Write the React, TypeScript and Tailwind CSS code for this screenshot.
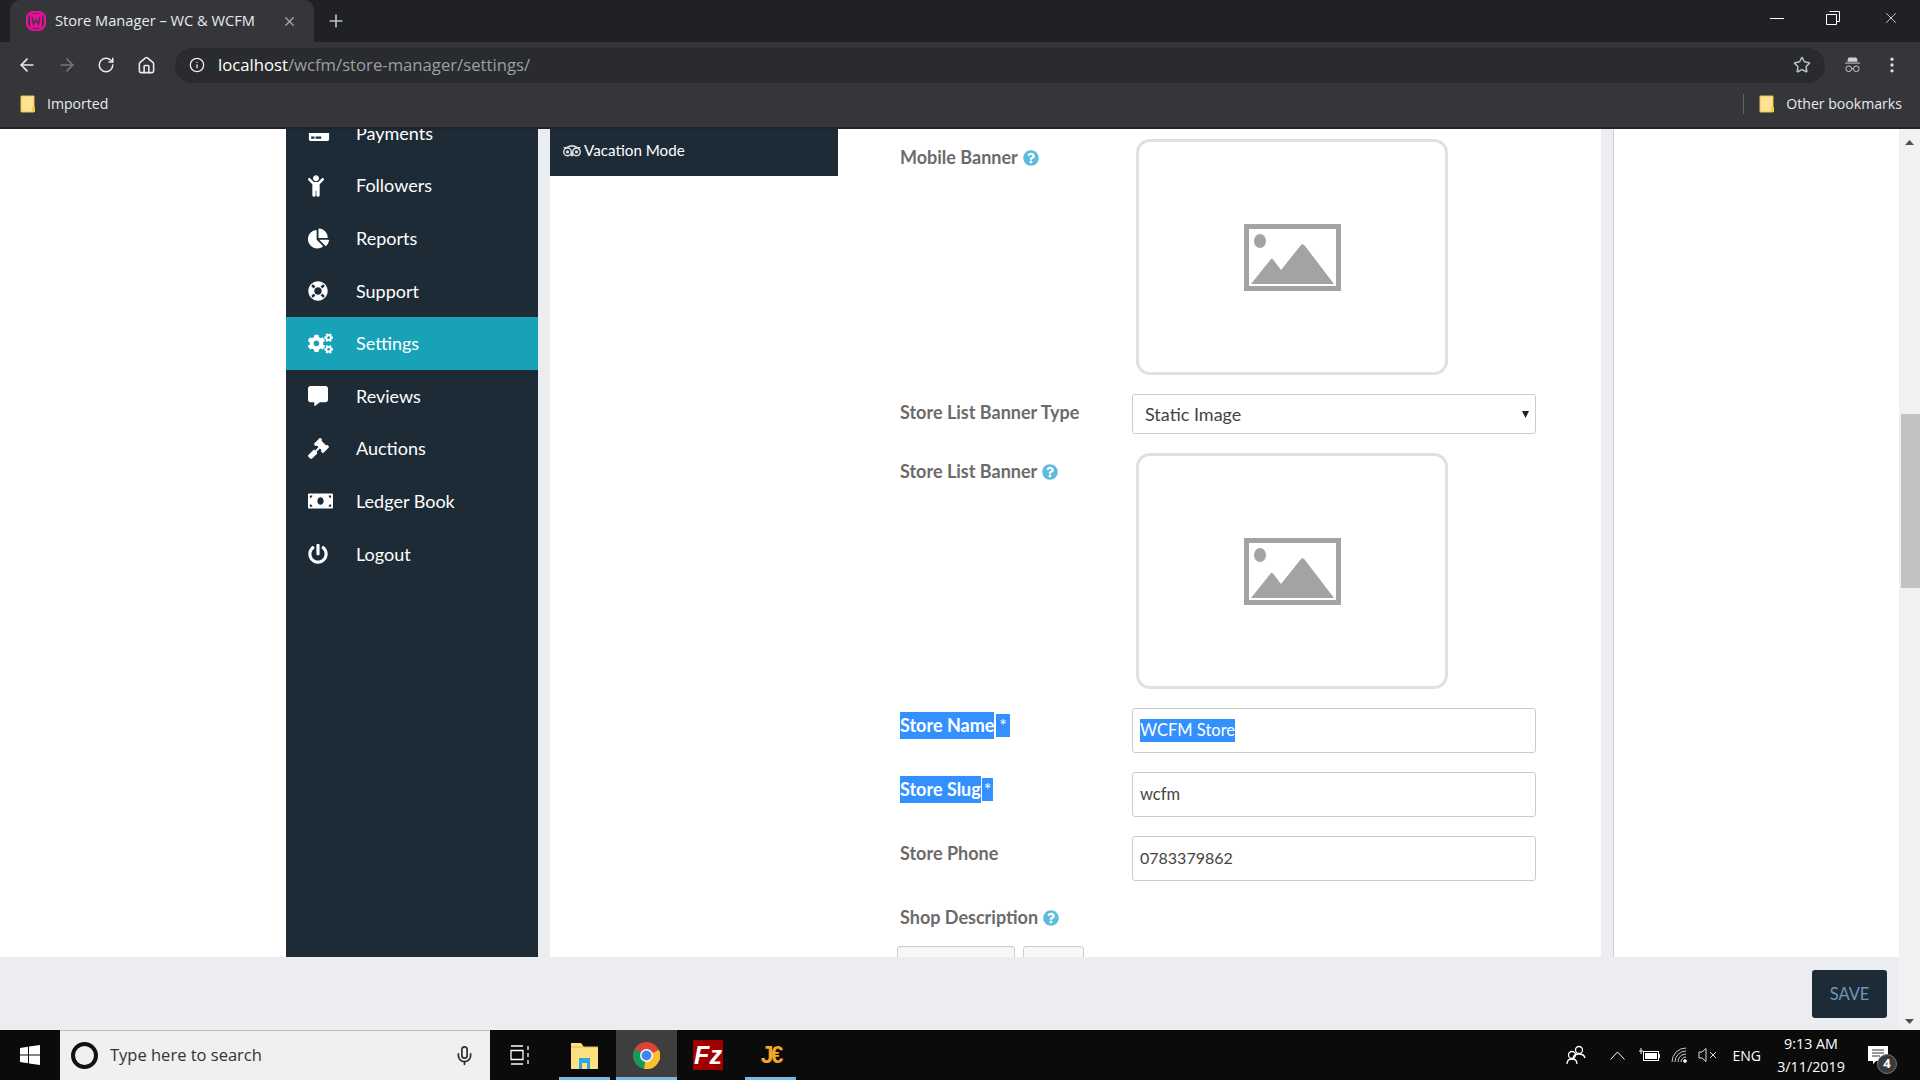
import React from "react";
import { ArrowLeft, ArrowRight, RotateCw, Home, Info, Star, MoreVertical, X, Plus, Mic } from "lucide-react";
import { FaCreditCard, FaChild, FaChartPie, FaLifeRing, FaCogs, FaCommentAlt, FaGavel, FaMoneyBill, FaPowerOff, FaTripadvisor, FaQuestionCircle } from "react-icons/fa";

const Folder = ({ className = "" }: { className?: string }) => (
  <svg width="16" height="18" viewBox="0 0 16 18" className={className}>
    <path d="M1 1h13v16H1z" fill="#fde293" stroke="#e8c34e" strokeWidth="1" />
    <rect x="12" y="12" width="3" height="5" fill="#f5c842" />
  </svg>
);

const Help = () => <FaQuestionCircle className="text-[#5bbcdd] w-[16px] h-[18px] ml-[5px] mt-[4px] shrink-0" />;

const Mountain = () => (
  <svg width="97" height="67" viewBox="0 0 97 67" className="block">
    <rect x="2.500" y="2.500" width="92" height="62" fill="#fff" stroke="#a3a3a3" strokeWidth="5" />
    <ellipse cx="16" cy="17" rx="6" ry="7" fill="#a3a3a3" />
    <path d="M7 60 L27 35 Q28 34 29.500 36 L37 46 L57 21 Q59 19 61 22 L90 60 Z" fill="#a3a3a3" />
  </svg>
);

const ImageBox = () => (
  <div className="w-[312px] h-[236px] ml-[4px] border-[3px] border-[#e0e0e0] rounded-[14px] flex items-center justify-center bg-white">
    <Mountain />
  </div>
);

const Label = ({ children }: { children: React.ReactNode }) => (
  <div className="w-[232px] shrink-0 flex items-start text-[18px] font-bold text-[#6b6b6b] leading-[24px]">{children}</div>
);

const Field = ({ children }: { children: React.ReactNode }) => (
  <div className="w-[404px] h-[45px] border border-[#ccc] rounded-[3px] bg-white flex items-center px-[7px] text-[16.500px] text-[#444] pb-[1px]">{children}</div>
);

const nav = [
  { t: "Payments", I: FaCreditCard, w: 22, h: 18 },
  { t: "Followers", I: FaChild, w: 16, h: 22 },
  { t: "Reports", I: FaChartPie, w: 21, h: 21 },
  { t: "Support", I: FaLifeRing, w: 20, h: 20 },
  { t: "Settings", I: FaCogs, w: 25, h: 21 },
  { t: "Reviews", I: FaCommentAlt, w: 20, h: 20 },
  { t: "Auctions", I: FaGavel, w: 21, h: 21 },
  { t: "Ledger Book", I: FaMoneyBill, w: 25, h: 20 },
  { t: "Logout", I: FaPowerOff, w: 20, h: 20 },
];

const Sidebar = () => (
  <div className="w-[252px] shrink-0 bg-[#1d2b37] overflow-hidden">
    <div className="-mt-[22px]">
      {nav.map(({ t, I, w, h }) => (
        <div key={t} className={`h-[52.6px] flex items-center text-white text-[18px] ${t === "Settings" ? "bg-[#17a2b8]" : ""}`}>
          <div className="w-[70px] pl-[22px] shrink-0 flex items-center">
            <I style={{ width: w, height: h }} />
          </div>
          <span>{t}</span>
        </div>
      ))}
    </div>
  </div>
);

const Form = () => (
  <div className="pl-[62px] pt-[10px]">
    <div className="flex">
      <Label><span className="mt-[6px] flex">Mobile Banner<Help /></span></Label>
      <ImageBox />
    </div>
    <div className="flex mt-[19px]">
      <Label><span className="mt-[6px]">Store List Banner Type</span></Label>
      <div className="w-[404px] h-[40px] border border-[#ccc] rounded-[3px] flex items-center justify-between pl-[12px] pr-[6px] text-[18px] text-[#444]">
        <span>Static Image</span>
        <svg width="7" height="8" viewBox="0 0 7 8"><path d="M0 1h7L3.500 8z" fill="#222" /></svg>
      </div>
    </div>
    <div className="flex mt-[19px]">
      <Label><span className="mt-[6px] flex">Store List Banner<Help /></span></Label>
      <ImageBox />
    </div>
    <div className="flex mt-[19px]">
      <Label>
        <span className="mt-[4px] flex items-start">
          <span className="bg-[#3390ff] text-white leading-[27px]">Store Name</span>
          <span className="bg-[#3390ff] text-white font-normal leading-[23px] ml-[2px] mt-[2px] px-[3px]">*</span>
        </span>
      </Label>
      <Field><span className="bg-[#3390ff] text-white leading-[23px] mt-[1px]">WCFM Store</span></Field>
    </div>
    <div className="flex mt-[19px]">
      <Label>
        <span className="mt-[4px] flex items-start">
          <span className="bg-[#3390ff] text-white leading-[27px]">Store Slug</span>
          <span className="bg-[#3390ff] text-white font-normal leading-[23px] ml-[1px] mt-[2px] px-[2px]">*</span>
        </span>
      </Label>
      <Field>wcfm</Field>
    </div>
    <div className="flex mt-[19px]">
      <Label><span className="mt-[5px]">Store Phone</span></Label>
      <Field><span className="text-[16px]">0783379862</span></Field>
    </div>
    <div className="flex mt-[24px]">
      <Label><span className="flex">Shop Description<Help /></span></Label>
    </div>
    <div className="flex gap-[8px] mt-[17px] -ml-[3px]">
      <div className="w-[118px] h-[30px] border border-[#ccc] rounded-[3px] bg-[#f7f7f7]" />
      <div className="w-[61px] h-[30px] border border-[#ccc] rounded-[3px] bg-[#f7f7f7]" />
    </div>
  </div>
);

const ChromeBars = () => (
  <div className="h-[129px] shrink-0 bg-[#35363a] text-white font-['Open_Sans'] border-b-2 border-[#222326]">
    <div className="h-[42px] bg-[#202124] flex items-end">
      <div className="ml-[10px] w-[304px] h-[42px] bg-[#35363a] rounded-t-[10px] flex items-center pl-[16px]">
        <svg width="20" height="20" viewBox="0 0 20 20" className="shrink-0">
          <rect x="1" y="1" width="18" height="18" rx="7" fill="none" stroke="#e5109a" strokeWidth="2.500" />
          <rect x="4" y="3" width="12" height="14" rx="2" fill="#e5109a" />
          <path d="M6 6l1.500 7 2.500-4 2.500 4L14 6" fill="none" stroke="#35363a" strokeWidth="1.300" />
        </svg>
        <span className="ml-[9px] w-[222px] text-[14.650px] whitespace-nowrap text-[#e8eaed]">Store Manager – WC &amp; WCFM</span>
        <X size={15} className="text-[#aaa] ml-[5px]" />
      </div>
      <Plus size={20} className="text-[#bdc1c6] ml-[12px] mb-[11px]" />
      <div className="flex-1" />
      <div className="flex items-center h-[42px] pb-[6px] pr-[20px]">
        <div className="w-[14px] h-px bg-white" />
        <svg width="14" height="14" viewBox="0 0 14 14" fill="none" stroke="#fff" className="ml-[42px]"><path d="M3.500.5h10v10h-3M.5 3.500h10v10H.5z" /></svg>
        <X size={18} strokeWidth={1} className="text-white ml-[42px]" />
      </div>
    </div>
    <div className="h-[45px] flex items-center relative pt-[1px]">
      <div className="flex items-center pl-[17px] w-[175px]">
        <ArrowLeft size={20} className="text-[#e8eaed]" />
        <ArrowRight size={20} className="text-[#777] ml-[20px]" />
        <RotateCw size={18} className="text-[#e8eaed] ml-[20px]" />
        <Home size={19} className="text-[#e8eaed] ml-[22px]" />
      </div>
      <div className="w-[1650px] h-[35px] bg-[#292b2e] rounded-full flex items-center pl-[14px] pr-[14px]">
        <Info size={16} className="text-[#e8eaed]" />
        <span className="ml-[13px] text-[16.700px]"><span className="text-white">localhost</span><span className="text-[#9aa0a6]">/wcfm/store-manager/settings/</span></span>
        <Star size={18} className="ml-auto text-[#bdc1c6]" />
      </div>
      <svg width="17" height="16" viewBox="0 0 18 17" className="ml-[19px] shrink-0" fill="none" stroke="#d0d0d0" strokeWidth="1">
        <path d="M5 1h8l1 3.500H4z" fill="#d0d0d0" /><path d="M1 6.500h16" /><circle cx="5" cy="12.500" r="3" /><circle cx="13" cy="12.500" r="3" /><path d="M8 12.500h2" />
      </svg>
      <MoreVertical size={20} className="ml-[21px] text-[#e0e0e0]" />
    </div>
    <div className="h-[40px] flex items-center text-[14.100px] text-[#e8eaed] pb-[6px]">
      <Folder className="ml-[20px]" />
      <span className="ml-[11px]">Imported</span>
      <div className="ml-auto w-px h-[20px] bg-[#5f6368]" />
      <Folder className="ml-[15px]" />
      <span className="ml-[11px] mr-[18px]">Other bookmarks</span>
    </div>
  </div>
);

const WinLogo = () => (
  <svg width="20" height="20" viewBox="0 0 20 20" fill="#fff"><path d="M0 3l8-1.200V9.500H0zM9 1.600L20 0v9.500H9zM0 10.500h8v7.700L0 17zM9 10.500h11V20L9 18.400z" /></svg>
);

const ChromeLogo = () => (
  <svg width="27" height="27" viewBox="0 0 27 27">
    <circle cx="13.500" cy="13.500" r="13.500" fill="#db4437" />
    <path d="M13.500 13.500L2 7A13.500 13.500 0 0 0 11 26.800z" fill="#0f9d58" />
    <path d="M13.500 13.500L26 8A13.500 13.500 0 0 1 11 26.800z" fill="#fbc02d" />
    <circle cx="13.500" cy="13.500" r="6.500" fill="#fff" />
    <circle cx="13.500" cy="13.500" r="5" fill="#4285f4" />
  </svg>
);

const TaskItem = ({ w, active, hover, children }: { w: number; active?: boolean; hover?: boolean; children: React.ReactNode }) => (
  <div style={{ width: w }} className={`h-[50px] flex items-center justify-center relative ${hover ? "bg-[#3e3e3e]" : ""}`}>
    {children}
    {active && <div className="absolute bottom-0 left-0 right-0 h-[3px] bg-[#76b9ed]" />}
  </div>
);

const Taskbar = () => (
  <div className="h-[50px] shrink-0 bg-[#0b0b0b] flex items-center text-white font-['Open_Sans']">
    <div className="w-[60px] flex justify-center"><WinLogo /></div>
    <div className="w-[430px] h-[50px] bg-[#f0f0f0] border-t border-[#bbb] flex items-center pl-[11px] text-[#333]">
      <div className="w-[27px] h-[27px] rounded-full border-[4px] border-[#111]" />
      <span className="ml-[12px] text-[16.500px]">Type here to search</span>
      <Mic size={21} className="ml-auto mr-[15px] text-[#333]" />
    </div>
    <div className="w-[69px] flex justify-center pr-[10px]">
      <svg width="20" height="20" viewBox="0 0 20 20" fill="none" stroke="#fff" strokeWidth="1.300">
        <path d="M1 1h12M1 19h12M1 5.500h12v9H1zM18 1v4M18 8v4M18 15v4" />
      </svg>
    </div>
    <TaskItem w={51} active>
      <svg width="27" height="27" viewBox="0 0 27 27">
        <path d="M0 1h10l3 4h14v22H0z" fill="#fde07f" />
        <path d="M0 5h27" stroke="#e2b93f" />
        <path d="M8 16h11v11h-3v-6h-5v6H8z" fill="#2fa8e0" />
      </svg>
    </TaskItem>
    <div className="w-[6px]" />
    <TaskItem w={61} active hover><ChromeLogo /></TaskItem>
    <div className="w-[4px]" />
    <TaskItem w={54}>
      <div className="w-[30px] h-[30px] bg-[#a00000] flex items-center justify-center text-white text-[25px] font-bold italic leading-none font-['Liberation_Sans']">Fz</div>
    </TaskItem>
    <div className="w-[10px]" />
    <TaskItem w={51} active>
      <span className="text-[#f5a623] text-[23px] font-bold font-['Liberation_Sans'] leading-none tracking-[-3px]">J€</span>
    </TaskItem>
    <div className="flex-1" />
    <svg width="20" height="20" viewBox="0 0 20 20" fill="none" stroke="#fff" strokeWidth="1.300" className="mr-[24px]">
      <circle cx="13" cy="5" r="3.500" /><path d="M7 13q1-4 6-4 5 0 6 4" /><circle cx="6" cy="10" r="3.500" /><path d="M1 19q0-5 5-5t5 5" />
    </svg>
    <svg width="15" height="9" viewBox="0 0 15 9" fill="none" stroke="#fff" className="mr-[14px]"><path d="M.5 8.500L7.500 1l7 7.500" /></svg>
    <svg width="21" height="14" viewBox="0 0 21 14" className="mr-[11px]"><rect x="4.500" y="3.500" width="15" height="9" fill="#000" stroke="#fff" /><rect x="6" y="5" width="12" height="6" fill="#fff" /><rect x="20" y="6" width="1" height="4" fill="#fff" /><path d="M0 3h4M2 0v6" stroke="#fff" /></svg>
    <svg width="16" height="16" viewBox="0 0 16 16" fill="none" stroke="#ccc" className="mr-[11px]"><path d="M1 15A14 14 0 0 1 15 1M4 15A11 11 0 0 1 15 4M7 15a8 8 0 0 1 8-8M10 15a5 5 0 0 1 5-5" /><circle cx="14" cy="14" r="1.500" fill="#fff" /></svg>
    <svg width="20" height="14" viewBox="0 0 20 14" fill="none" stroke="#ddd" className="mr-[15px]"><path d="M1 4h3l4-3.500v13L4 10H1zM12 4l6 6M18 4l-6 6" /></svg>
    <span className="text-[14px] mr-[14px]">ENG</span>
    <div className="w-[72px] text-center text-[14.300px] leading-[23px] whitespace-nowrap flex flex-col items-center"><span>9:13 AM</span><span>3/11/2019</span></div>
    <div className="w-[73px] pl-[21px] relative h-[50px] flex items-center">
      <svg width="20" height="18" viewBox="0 0 20 18"><path d="M0 0h20v15H8l-3 3v-3H0z" fill="#fff" /><path d="M4 4h12M4 7h12M4 10h8" stroke="#333" /></svg>
      <div className="absolute left-[30px] top-[24px] w-[20px] h-[20px] rounded-full bg-[#3a3a3a] border border-[#777] text-[13px] font-bold flex items-center justify-center">4</div>
    </div>
  </div>
);

export default function App() {
  return (
    <div className="w-[1920px] h-[1080px] flex flex-col overflow-hidden bg-white font-['Lato']">
      <ChromeBars />
      <div className="flex-1 min-h-0 flex">
        <div className="flex-1 min-w-0 flex flex-col">
          <div className="flex-1 min-h-0 flex">
            <div className="w-[286px] shrink-0" />
            <Sidebar />
            <div className="w-[12px] shrink-0 bg-[#ebedf0]" />
            <div className="w-[1051px] shrink-0 flex overflow-hidden">
              <div className="w-[288px] shrink-0">
                <div className="h-[47px] bg-[#1d2b37] flex items-center pl-[12px] pb-[4px] text-white text-[15.200px]">
                  <FaTripadvisor className="w-[20px] h-[16px] text-[#ddd] mr-[2px]" />
                  Vacation Mode
                </div>
              </div>
              <Form />
            </div>
            <div className="w-[13px] shrink-0 bg-[#ebedf0] border-r border-[#ccc]" />
            <div className="flex-1" />
          </div>
          <div className="h-[73px] shrink-0 bg-[#ebedf0] flex items-start justify-end pr-[12px] pt-[13px]">
            <div className="w-[75px] h-[48px] bg-[#1d2b37] rounded-[3px] flex items-center justify-center text-[16.500px] text-[#6f96b8]">SAVE</div>
          </div>
        </div>
        <div className="w-[21px] shrink-0 bg-[#f1f1f1] flex flex-col items-center relative">
          <svg width="9" height="5" viewBox="0 0 9 5" className="mt-[11px]"><path d="M0 5L4.500 0 9 5z" fill="#505050" /></svg>
          <div className="absolute top-[285px] left-[2px] right-0 h-[174px] bg-[#c1c1c1]" />
          <svg width="9" height="5" viewBox="0 0 9 5" className="mt-auto mb-[6px]"><path d="M0 0L4.500 5 9 0z" fill="#505050" /></svg>
        </div>
      </div>
      <Taskbar />
    </div>
  );
}
